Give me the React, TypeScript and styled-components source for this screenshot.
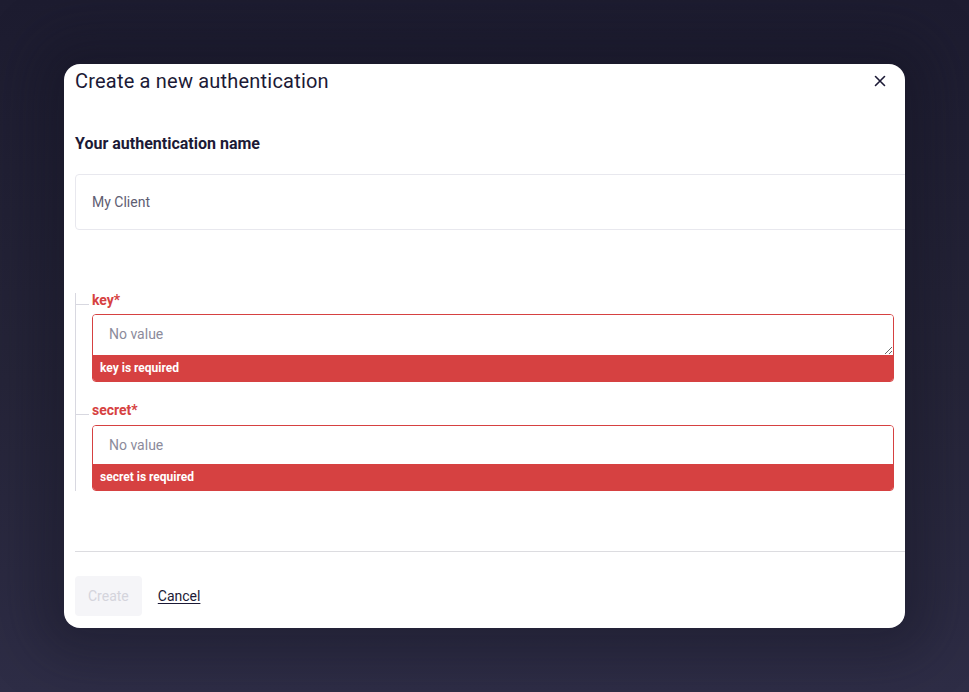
import styled, { createGlobalStyle } from "styled-components";

const GlobalStyle = createGlobalStyle`
  html, body {
    margin: 0;
    padding: 0;
  }
  body {
    font-family: Roboto, "Liberation Sans", sans-serif;
    background: #242338;
  }
`;

const Page = styled.div`
  min-height: 692px;
  box-sizing: border-box;
  padding: 64px;
  background: linear-gradient(180deg, #1d1c30 0%, #262539 55%, #2e2d46 100%);
`;

const Modal = styled.div`
  width: 841px;
  height: 564px;
  box-sizing: border-box;
  background: #ffffff;
  border-radius: 16px;
  overflow: hidden;
  padding: 5px 0 12px 11px;
  display: flex;
  flex-direction: column;
  box-shadow: 0 0 50px 30px rgba(18, 17, 32, 0.35);
`;

const Header = styled.div`
  display: flex;
  align-items: center;
  justify-content: space-between;
  padding-right: 17px;
`;

const Title = styled.h1`
  margin: 0;
  font-size: 20px;
  line-height: 24px;
  font-weight: 400;
  letter-spacing: 0.2px;
  color: #1c1a36;
`;

const CloseButton = styled.button`
  border: none;
  background: none;
  padding: 0;
  width: 16px;
  height: 16px;
  display: flex;
  align-items: center;
  justify-content: center;
  cursor: pointer;
  color: #1c1a36;
`;

const Body = styled.div`
  width: 850px;
  flex: 1;
  display: flex;
  flex-direction: column;
`;

const SectionTitle = styled.h2`
  margin: 41px 0 0 0;
  font-size: 16px;
  line-height: 20px;
  font-weight: 700;
  color: #1c1a36;
`;

const NameInput = styled.input`
  margin-top: 20px;
  height: 56px;
  box-sizing: border-box;
  border: 1px solid #e8e8ee;
  border-radius: 4px;
  padding: 0 16px;
  font-family: inherit;
  font-size: 14px;
  color: #5e5d72;
  outline: none;
`;

const Group = styled.div`
  margin-top: 63px;
  width: 818px;
  border-left: 1px solid #d8d8e0;
  display: flex;
  flex-direction: column;
  gap: 21px;
`;

const Field = styled.div`
  display: grid;
  grid-template-columns: 16px 1fr;
`;

const Tick = styled.div`
  height: 11px;
  border-bottom: 1px solid #d8d8e0;
  margin-right: 3px;
`;

const FieldLabel = styled.label<{ $gap: number }>`
  font-size: 14px;
  line-height: 14px;
  font-weight: 700;
  color: #d64141;
  margin-bottom: ${props => props.$gap}px;
`;

const InputWrap = styled.div`
  grid-column: 2;
  border: 1px solid #d64141;
  border-radius: 4px;
  overflow: hidden;
  display: flex;
  flex-direction: column;
`;

const fieldText = `
  border: none;
  outline: none;
  padding: 0 16px;
  font-family: inherit;
  font-size: 14px;
  color: #1c1a36;
  background: #fff;
  box-sizing: border-box;
  &::placeholder {
    color: #8c8b9b;
  }
`;

const TextArea = styled.textarea`
  ${fieldText}
  height: 40px;
  padding-top: 11px;
  line-height: 16px;
  resize: vertical;
  display: block;
`;

const TextInput = styled.input`
  ${fieldText}
  height: 38px;
`;

const ErrorBar = styled.div`
  background: #d64141;
  color: #ffffff;
  font-size: 12px;
  font-weight: 700;
  height: 26px;
  line-height: 27px;
  padding: 0 7px;
`;

const Divider = styled.hr`
  margin: auto 0 0 0;
  border: none;
  border-top: 1px solid #dcdce0;
  width: 840px;
`;

const Footer = styled.div`
  margin-top: 24px;
  display: flex;
  align-items: center;
  gap: 16px;
`;

const CreateButton = styled.button`
  height: 40px;
  padding: 0 13px;
  border: none;
  border-radius: 4px;
  background: #f5f5f8;
  color: #d4d4dc;
  font-family: inherit;
  font-size: 14px;
`;

const CancelLink = styled.button`
  border: none;
  background: none;
  padding: 0;
  font-family: inherit;
  font-size: 14px;
  color: #1c1a36;
  text-decoration: underline;
  text-underline-offset: 2px;
  cursor: pointer;
`;

const App = () => {
  return (
    <>
      <GlobalStyle />
      <Page>
        <Modal>
          <Header>
            <Title>Create a new authentication</Title>
            <CloseButton aria-label="Close">
              <svg width="12" height="12" viewBox="0 0 12 12" fill="none">
                <path d="M1.5 1.5 L10.5 10.5 M10.5 1.5 L1.5 10.5" stroke="currentColor" strokeWidth="1.6" strokeLinecap="round" />
              </svg>
            </CloseButton>
          </Header>
          <Body>
            <SectionTitle>Your authentication name</SectionTitle>
            <NameInput defaultValue="My Client" />
            <Group>
              <Field>
                <Tick />
                <FieldLabel $gap={7}>key*</FieldLabel>
                <InputWrap>
                  <TextArea placeholder="No value" />
                  <ErrorBar>key is required</ErrorBar>
                </InputWrap>
              </Field>
              <Field>
                <Tick />
                <FieldLabel $gap={8}>secret*</FieldLabel>
                <InputWrap>
                  <TextInput placeholder="No value" />
                  <ErrorBar>secret is required</ErrorBar>
                </InputWrap>
              </Field>
            </Group>
            <Divider />
            <Footer>
              <CreateButton disabled>Create</CreateButton>
              <CancelLink>Cancel</CancelLink>
            </Footer>
          </Body>
        </Modal>
      </Page>
    </>
  );
};

export default App;
